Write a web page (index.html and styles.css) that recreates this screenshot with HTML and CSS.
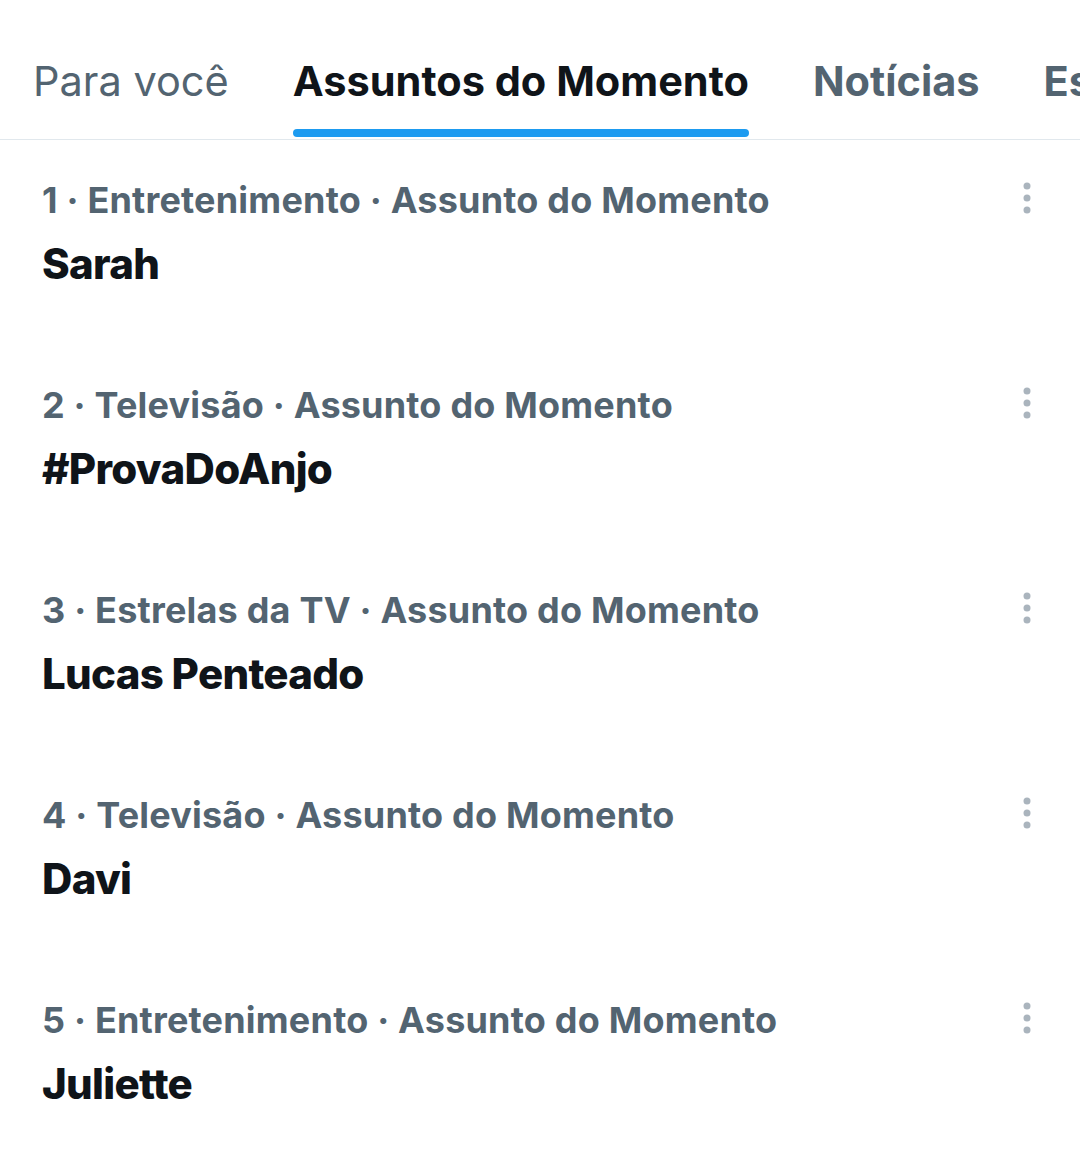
FILE: index.html
```html
<!DOCTYPE html>
<html lang="pt-BR">
<head>
    <meta charset="UTF-8">
    <meta name="viewport" content="width=device-width, initial-scale=1.0">
    <title>Explorar - Assuntos do Momento</title>
    <link rel="stylesheet" href="styles.css">
</head>
<body>
    <nav class="tabs">
        <div class="tab"><span class="tab-label">Para você</span><span class="tab-bar"></span></div>
        <div class="tab active"><span class="tab-label">Assuntos do Momento</span><span class="tab-bar"></span></div>
        <div class="tab"><span class="tab-label">Notícias</span><span class="tab-bar"></span></div>
        <div class="tab"><span class="tab-label">Esportes</span><span class="tab-bar"></span></div>
    </nav>

    <ul class="trends">
        <li class="trend">
            <div class="trend-text">
                <div class="trend-meta">1 · Entretenimento · Assunto do Momento</div>
                <div class="trend-title">Sarah</div>
            </div>
            <svg class="more" viewBox="0 0 20 32"><circle cx="10" cy="4" r="3.5"/><circle cx="10" cy="16" r="3.5"/><circle cx="10" cy="28" r="3.5"/></svg>
        </li>
        <li class="trend">
            <div class="trend-text">
                <div class="trend-meta">2 · Televisão · Assunto do Momento</div>
                <div class="trend-title">#ProvaDoAnjo</div>
            </div>
            <svg class="more" viewBox="0 0 20 32"><circle cx="10" cy="4" r="3.5"/><circle cx="10" cy="16" r="3.5"/><circle cx="10" cy="28" r="3.5"/></svg>
        </li>
        <li class="trend">
            <div class="trend-text">
                <div class="trend-meta">3 · Estrelas da TV · Assunto do Momento</div>
                <div class="trend-title">Lucas Penteado</div>
            </div>
            <svg class="more" viewBox="0 0 20 32"><circle cx="10" cy="4" r="3.5"/><circle cx="10" cy="16" r="3.5"/><circle cx="10" cy="28" r="3.5"/></svg>
        </li>
        <li class="trend">
            <div class="trend-text">
                <div class="trend-meta">4 · Televisão · Assunto do Momento</div>
                <div class="trend-title">Davi</div>
            </div>
            <svg class="more" viewBox="0 0 20 32"><circle cx="10" cy="4" r="3.5"/><circle cx="10" cy="16" r="3.5"/><circle cx="10" cy="28" r="3.5"/></svg>
        </li>
        <li class="trend">
            <div class="trend-text">
                <div class="trend-meta">5 · Entretenimento · Assunto do Momento</div>
                <div class="trend-title">Juliette</div>
            </div>
            <svg class="more" viewBox="0 0 20 32"><circle cx="10" cy="4" r="3.5"/><circle cx="10" cy="16" r="3.5"/><circle cx="10" cy="28" r="3.5"/></svg>
        </li>
    </ul>
</body>
</html>
```

FILE: styles.css
```css
body {
    margin: 0;
    background: #ffffff;
    font-family: Inter, "Noto Sans", sans-serif;
    color: #0f1419;
    overflow: hidden;
}

.tabs {
    display: flex;
    height: 139px;
    border-bottom: 1px solid #e1e8ed;
    white-space: nowrap;
    overflow: hidden;
}

.tab {
    display: flex;
    flex-direction: column;
    flex-shrink: 0;
    padding: 51px 32px 2px;
}

.tab:first-child {
    padding-left: 33px;
}

.tab-label {
    font-size: 41.5px;
    line-height: 60px;
    font-weight: 400;
    color: #536471;
}

.tab-bar {
    display: block;
    height: 8px;
    margin-top: 18px;
    border-radius: 4px;
}

.tab.active .tab-label {
    font-weight: 700;
    color: #0f1419;
}

.tab.active .tab-bar {
    background: #1d9bf0;
}

.tab:nth-child(3) .tab-label,
.tab:nth-child(4) .tab-label {
    font-weight: 700;
}

.trends {
    list-style: none;
    margin: 0;
    padding: 0;
}

.trend {
    display: flex;
    justify-content: space-between;
    align-items: flex-start;
    height: 205px;
    box-sizing: border-box;
    padding: 35px 43px 0 42px;
}

.trend-meta {
    font-size: 36px;
    line-height: 50px;
    font-weight: 700;
    letter-spacing: 0.2px;
    color: #536471;
}

.trend-title {
    font-size: 42px;
    line-height: 78px;
    font-weight: 800;
    letter-spacing: -0.7px;
    color: #0f1419;
}

.more {
    width: 20px;
    height: 32px;
    margin-top: 7px;
    fill: #aab4bd;
}
```
